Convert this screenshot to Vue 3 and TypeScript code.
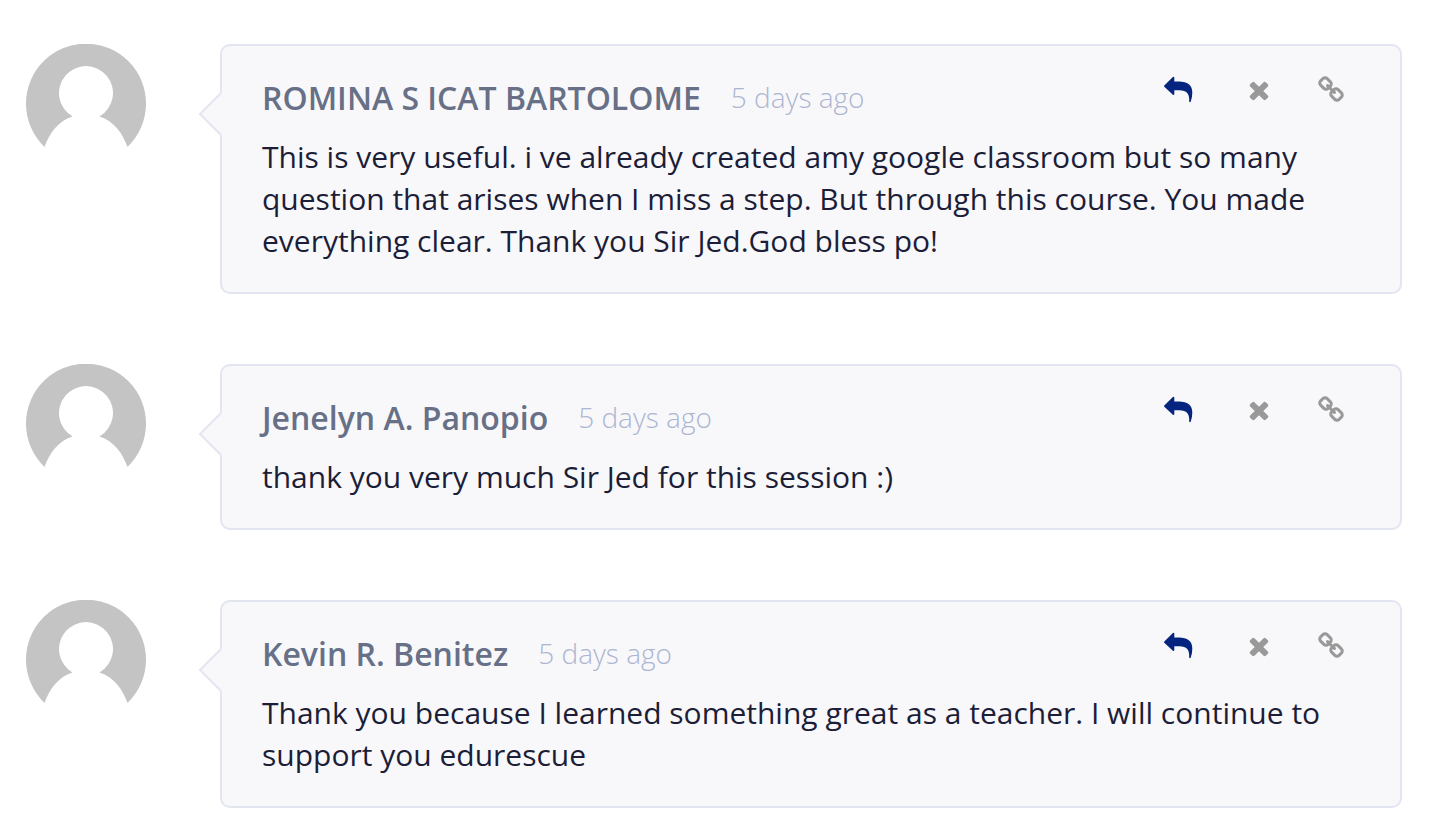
<script setup lang="ts">
interface Comment {
  id: number
  author: string
  age: string
  text: string
}

const comments: Comment[] = [
  {
    id: 1,
    author: 'ROMINA S ICAT BARTOLOME',
    age: '5 days ago',
    text: 'This is very useful. i ve already created amy google classroom but so many question that arises when I miss a step. But through this course. You made everything clear. Thank you Sir Jed.God bless po!',
  },
  {
    id: 2,
    author: 'Jenelyn A. Panopio',
    age: '5 days ago',
    text: 'thank you very much Sir Jed for this session :)',
  },
  {
    id: 3,
    author: 'Kevin R. Benitez',
    age: '5 days ago',
    text: 'Thank you because I learned something great as a teacher. I will continue to support you edurescue',
  },
]
</script>

<template>
  <main class="comments">
    <article v-for="comment in comments" :key="comment.id" class="comment">
      <svg class="avatar" viewBox="0 0 120 120" aria-hidden="true">
        <path
          fill="#c4c4c4"
          d="M18.500 103A60 60 0 1 1 101.500 103C97 90 88 77 73.500 72.500A27 27 0 1 0 46.500 72.500C32 77 23 90 18.500 103Z"
        />
      </svg>
      <div class="bubble">
        <svg class="pointer" viewBox="0 0 24 44" aria-hidden="true">
          <path class="pointer-fill" d="M24 0L2 22L24 44Z" />
          <path class="pointer-line" d="M23 1L2 22L23 43" />
        </svg>
        <header class="head">
          <h2 class="author">{{ comment.author }}</h2>
          <time class="age">{{ comment.age }}</time>
          <div class="actions">
            <button type="button" class="action reply" aria-label="Reply">
              <svg viewBox="0 0 28 28" aria-hidden="true">
                <path d="M.3 9.400L8.900 1.100Q10.300 .3 10.300 1.800V5.500H15C23.500 5.500 28.300 9 28.300 16.500Q28.300 21.500 26.800 25.500Q26 26.900 25.200 25.500C25.600 18 23 14.300 15 14.300H10.300V18Q10.300 19.700 8.900 18.800L.3 10.800Q-.3 10.100 .3 9.400Z" />
              </svg>
            </button>
            <button type="button" class="action" aria-label="Delete">
              <svg viewBox="0 0 1792 1792" aria-hidden="true">
                <path d="M1490 1322q0 40-28 68l-136 136q-28 28-68 28t-68-28l-294-294-294 294q-28 28-68 28t-68-28l-136-136q-28-28-28-68t28-68l294-294-294-294q-28-28-28-68t28-68l136-136q28-28 68-28t68 28l294 294 294-294q28-28 68-28t68 28l136 136q28 28 28 68t-28 68l-294 294 294 294q28 28 28 68z" />
              </svg>
            </button>
            <a href="#" class="action" aria-label="Permalink">
              <svg viewBox="0 0 1792 1792" aria-hidden="true">
                <path d="M1520 1216q0-40-28-68l-208-208q-28-28-68-28-42 0-72 32 3 3 19 18.500t21.500 21.500 15 19 13 25.500 3.500 27.500q0 40-28 68t-68 28q-15 0-27.500-3.500t-25.500-13-19-15-21.500-21.500-18.500-19q-33 31-33 73 0 40 28 68l206 207q27 27 68 27 40 0 68-26l147-146q28-28 28-67zm-703-705q0-40-28-68l-206-207q-28-28-68-28-39 0-68 27l-147 146q-28 28-28 67 0 40 28 68l208 208q27 27 68 27 42 0 72-31-3-3-19-18.500t-21.500-21.500-15-19-13-25.500-3.500-27.500q0-40 28-68t68-28q15 0 27.500 3.500t25.500 13 19 15 21.500 21.500 18.500 19q33-31 33-73zm895 705q0 120-85 203l-147 146q-83 83-203 83-121 0-204-85l-206-207q-83-83-83-203 0-123 88-209l-88-88q-86 88-208 88-120 0-204-84l-208-208q-84-84-84-204t85-203l147-146q83-83 203-83 121 0 204 85l206 207q83 83 83 203 0 123-88 209l88 88q86-88 208-88 120 0 204 84l208 208q84 84 84 204z" />
              </svg>
            </a>
          </div>
        </header>
        <p class="text">{{ comment.text }}</p>
      </div>
    </article>
  </main>
</template>

<style>
body {
  margin: 0;
  background: #fff;
}
</style>

<style scoped>
.comments {
  display: flex;
  flex-direction: column;
  gap: 70px;
  padding: 44px 28px 16px 26px;
  font-family: "Open Sans", "Noto Sans", sans-serif;
}
.comment {
  display: flex;
  align-items: flex-start;
  gap: 74px;
}
.avatar {
  flex: none;
  width: 120px;
  height: 120px;
}
.bubble {
  position: relative;
  flex: 1;
  min-width: 0;
  box-sizing: border-box;
  padding: 30px 55px 30px 40px;
  border: 2px solid #e3e5f1;
  border-radius: 10px;
  background: #f8f8fb;
}
.pointer {
  position: absolute;
  top: 46px;
  left: -24px;
  width: 24px;
  height: 44px;
}
.pointer-fill {
  fill: #f8f8fb;
}
.pointer-line {
  fill: none;
  stroke: #e3e5f1;
  stroke-width: 2;
}
.head {
  display: flex;
  align-items: flex-start;
  height: 60px;
}
.author {
  margin: 0 30px 0 0;
  font-size: 32px;
  font-weight: 600;
  line-height: 44px;
  color: #677086;
}
.age {
  font-size: 28px;
  font-weight: 300;
  line-height: 42px;
  color: #adb6d0;
}
.actions {
  display: flex;
  gap: 44px;
  margin-left: auto;
}
.action {
  display: block;
  width: 28px;
  height: 28px;
  padding: 0;
  border: 0;
  background: none;
  color: #999;
  cursor: pointer;
}
.action svg {
  display: block;
  width: 28px;
  height: 28px;
  fill: currentColor;
  overflow: visible;
}
.reply {
  margin-right: 9px;
  color: #04247f;
}
.text {
  margin: 0;
  font-size: 30px;
  line-height: 42px;
  color: #1c1e38;
}
</style>
